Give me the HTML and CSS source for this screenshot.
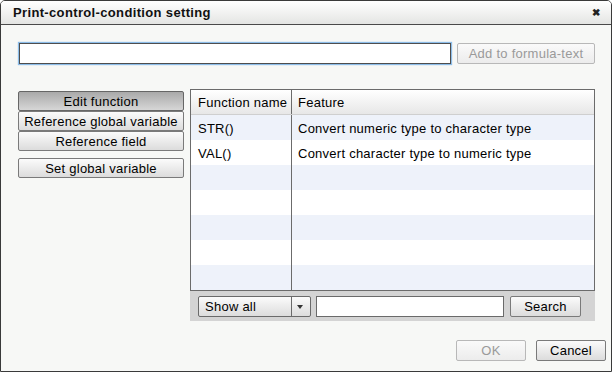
FILE: index.html
```html
<!DOCTYPE html>
<html>
<head>
<meta charset="utf-8">
<link rel="stylesheet" href="styles.css">
</head>
<body>
<div class="dialog">
  <div class="titlebar">
    <span class="title">Print-control-condition setting</span>
    <span class="close">&#x2716;</span>
  </div>
  <div class="content">
    <div class="formula-row">
      <input class="formula" type="text">
      <button class="btn add" disabled>Add to formula-text</button>
    </div>
    <div class="main">
      <div class="sidebar">
        <div class="tabgroup">
          <button class="btn side pressed">Edit function</button>
          <button class="btn side">Reference global variable</button>
          <button class="btn side">Reference field</button>
        </div>
        <button class="btn side">Set global variable</button>
      </div>
      <div class="panel">
        <div class="grid">
          <div class="row head"><div class="c1">Function name</div><div class="c2">Feature</div></div>
          <div class="row alt"><div class="c1">STR()</div><div class="c2">Convert numeric type to character type</div></div>
          <div class="row"><div class="c1">VAL()</div><div class="c2">Convert character type to numeric type</div></div>
          <div class="row alt"><div class="c1"></div><div class="c2"></div></div>
          <div class="row"><div class="c1"></div><div class="c2"></div></div>
          <div class="row alt"><div class="c1"></div><div class="c2"></div></div>
          <div class="row"><div class="c1"></div><div class="c2"></div></div>
          <div class="row alt"><div class="c1"></div><div class="c2"></div></div>
        </div>
        <div class="toolbar">
          <div class="select"><span class="sel-text">Show all</span><span class="sel-arrow"></span></div>
          <input class="search-input" type="text">
          <button class="btn search">Search</button>
        </div>
      </div>
    </div>
  </div>
  <div class="footer">
    <button class="btn foot" disabled>OK</button>
    <button class="btn foot">Cancel</button>
  </div>
</div>
</body>
</html>
```
FILE: styles.css
```css
* { box-sizing: border-box; }
html, body { margin: 0; padding: 0; background: #ffffff; }
body { font-family: "Liberation Sans", Arial, sans-serif; font-size: 13px; letter-spacing: 0.25px; color: #000; }

.dialog {
  width: 612px;
  height: 372px;
  border: 1px solid #3a3a3a;
  border-radius: 5px 5px 0 0;
  background: #f7f8f6;
  display: flex;
  flex-direction: column;
  overflow: hidden;
}

.titlebar {
  height: 24px;
  flex: none;
  border-bottom: 1px solid #4a4a4a;
  background: linear-gradient(#ffffff, #e4e5e3);
  display: flex;
  align-items: center;
  justify-content: space-between;
  padding: 0 11px 1px 12px;
}
.title { font-weight: bold; font-size: 13px; letter-spacing: 0.35px; color: #111; }
.close { font-size: 10px; font-weight: bold; color: #222; letter-spacing: 0; }

.content { flex: 1; padding: 17px 16px 0 17px; }

.formula-row { display: flex; align-items: center; height: 22px; }
.formula {
  margin: 0 0 0 1px;
  width: 432px;
  height: 21px;
  border: 1px solid #4e4e4e;
  box-shadow: 0 0 1px 1px #8cbde9;
  background: #fff;
  padding: 0 3px;
  font: inherit;
  outline: none;
}

.btn {
  font: inherit;
  font-size: 13px;
  letter-spacing: 0.25px;
  color: #000;
  border: 1px solid #7a7a7a;
  border-radius: 2px;
  background: linear-gradient(#fbfbfb, #dcdcdc);
  padding: 1px 0 0;
  margin: 0;
  height: 20px;
  line-height: 18px;
  text-align: center;
  white-space: nowrap;
}
.btn:disabled { color: #9a9a9a; border-color: #b8b8b8; background: linear-gradient(#fafafa, #ececec); }
.add { width: 138px; margin-left: 6px; height: 21px; }

.main { display: flex; margin-top: 25px; }
.sidebar { width: 166px; display: flex; flex-direction: column; gap: 7px; padding-top: 2px; }
.tabgroup { display: flex; flex-direction: column; gap: 0; }
.side { width: 166px; height: 20px; }
.pressed { background: linear-gradient(#a9a9a9, #d6d6d6); border-color: #666; }

.panel { margin-left: 6px; width: 405px; display: flex; flex-direction: column; }
.grid { border: 1px solid #6b6b6b; }
.row { display: flex; height: 25px; background: #fff; }
.row.alt { background: #eef2fa; }
.row.head { background: linear-gradient(#ffffff, #e7e7e7); border-bottom: 1px solid #cfcfcf; }
.c1 { width: 101px; border-right: 1px solid #6b6b6b; padding: 1px 7px 0; display: flex; align-items: center; white-space: nowrap; }
.c2 { flex: 1; padding: 1px 6px 0; display: flex; align-items: center; white-space: nowrap; }

.toolbar {
  height: 30px;
  background: #d4d4d4;
  display: flex;
  align-items: center;
  padding: 0 8px;
}
.select {
  width: 113px;
  height: 21px;
  border: 1px solid #6a6a6a;
  border-radius: 2px;
  background: linear-gradient(#fbfbfb, #dcdcdc);
  display: flex;
}
.sel-text { flex: 1; padding-left: 6px; line-height: 20px; }
.sel-arrow {
  width: 19px;
  border-left: 1px solid #6a6a6a;
  position: relative;
}
.sel-arrow::after {
  content: "";
  position: absolute;
  left: 5px;
  top: 8px;
  border-left: 3px solid transparent;
  border-right: 3px solid transparent;
  border-top: 4px solid #333;
}
.search-input {
  margin: 0 0 0 5px;
  width: 188px;
  height: 21px;
  border: 1px solid #6a6a6a;
  background: #fff;
  font: inherit;
  padding: 0 3px;
  outline: none;
}
.search { width: 71px; height: 21px; margin-left: 6px; }

.footer {
  flex: none;
  display: flex;
  justify-content: flex-end;
  gap: 10px;
  padding: 0 5px 10px 0;
}
.foot { width: 70px; height: 21px; }
```
